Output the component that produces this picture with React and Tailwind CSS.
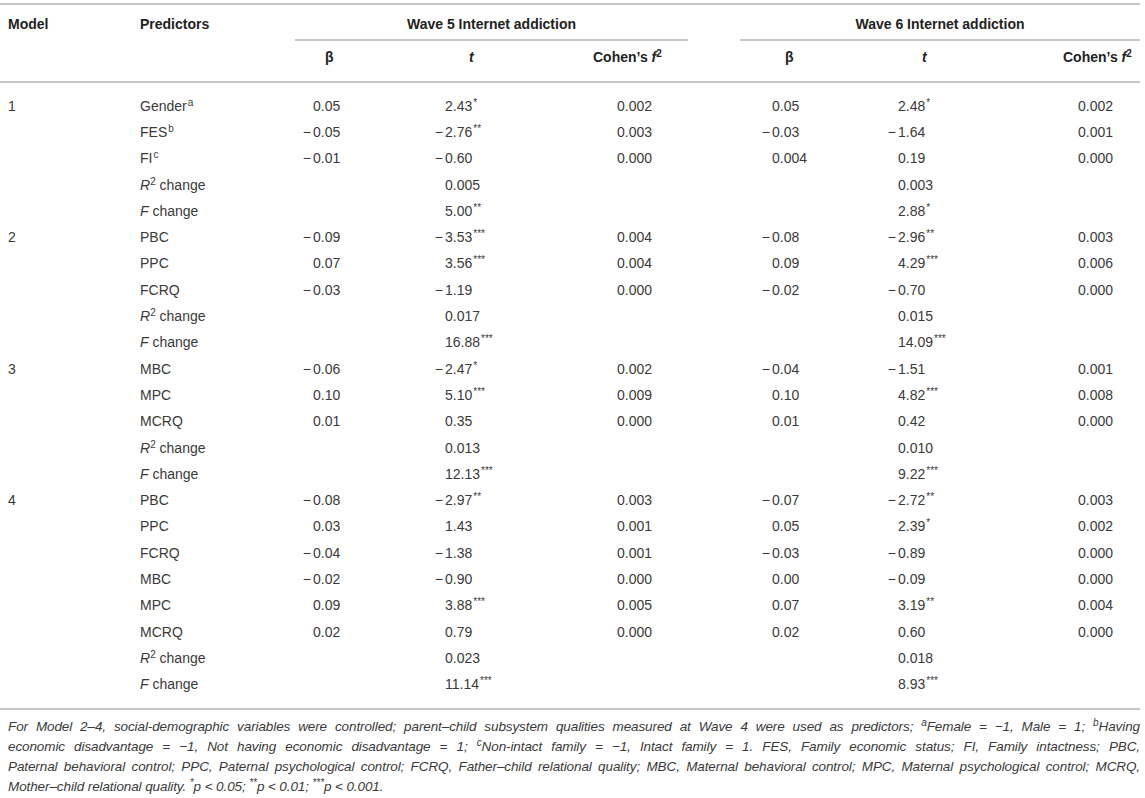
import React from "react";

const cols = "grid grid-cols-[140px_155px_105px_140px_148px_52px_120px_140px_140px]";

const rows = [
  ["1", "Gender", "a", ["0.05", "2.43*", "0.002", "0.05", "2.48*", "0.002"]],
  ["", "FES", "b", ["-0.05", "-2.76**", "0.003", "-0.03", "-1.64", "0.001"]],
  ["", "FI", "c", ["-0.01", "-0.60", "0.000", "0.004", "0.19", "0.000"]],
  ["", "R2", "", ["", "0.005", "", "", "0.003", ""]],
  ["", "F", "", ["", "5.00**", "", "", "2.88*", ""]],
  ["2", "PBC", "", ["-0.09", "-3.53***", "0.004", "-0.08", "-2.96**", "0.003"]],
  ["", "PPC", "", ["0.07", "3.56***", "0.004", "0.09", "4.29***", "0.006"]],
  ["", "FCRQ", "", ["-0.03", "-1.19", "0.000", "-0.02", "-0.70", "0.000"]],
  ["", "R2", "", ["", "0.017", "", "", "0.015", ""]],
  ["", "F", "", ["", "16.88***", "", "", "14.09***", ""]],
  ["3", "MBC", "", ["-0.06", "-2.47*", "0.002", "-0.04", "-1.51", "0.001"]],
  ["", "MPC", "", ["0.10", "5.10***", "0.009", "0.10", "4.82***", "0.008"]],
  ["", "MCRQ", "", ["0.01", "0.35", "0.000", "0.01", "0.42", "0.000"]],
  ["", "R2", "", ["", "0.013", "", "", "0.010", ""]],
  ["", "F", "", ["", "12.13***", "", "", "9.22***", ""]],
  ["4", "PBC", "", ["-0.08", "-2.97**", "0.003", "-0.07", "-2.72**", "0.003"]],
  ["", "PPC", "", ["0.03", "1.43", "0.001", "0.05", "2.39*", "0.002"]],
  ["", "FCRQ", "", ["-0.04", "-1.38", "0.001", "-0.03", "-0.89", "0.000"]],
  ["", "MBC", "", ["-0.02", "-0.90", "0.000", "0.00", "-0.09", "0.000"]],
  ["", "MPC", "", ["0.09", "3.88***", "0.005", "0.07", "3.19**", "0.004"]],
  ["", "MCRQ", "", ["0.02", "0.79", "0.000", "0.02", "0.60", "0.000"]],
  ["", "R2", "", ["", "0.023", "", "", "0.018", ""]],
  ["", "F", "", ["", "11.14***", "", "", "8.93***", ""]],
];

// padding / sign box per value column
const valueCols = [
  { pad: "pl-[4px]", sign: "w-[14px]" },
  { pad: "pl-[31px]", sign: "w-[14px]" },
  { pad: "pl-[77px]", sign: "" },
  { pad: "pl-[18px]", sign: "w-[14px]" },
  { pad: "pl-[24px]", sign: "w-[14px]" },
  { pad: "pl-[78px]", sign: "" },
];

function Num({ v, col }) {
  if (!v) return <div />;
  const neg = v.startsWith("-");
  const body = neg ? v.slice(1) : v;
  const stars = body.replace(/[^*]/g, "");
  const digits = body.replace(/\*/g, "");
  return (
    <div className={`${col.pad} whitespace-nowrap`}>
      {col.sign && (
        <span className={`inline-block text-right pr-[2px] ${col.sign}`}>{neg ? "\u2212" : ""}</span>
      )}
      {digits}
      {stars && <sup className="text-[10px] ml-[1px]">{stars}</sup>}
    </div>
  );
}

function Predictor({ name, sup }) {
  if (name === "R2")
    return (
      <div>
        <i>R</i>
        <sup className="text-[10px]">2</sup> change
      </div>
    );
  if (name === "F")
    return (
      <div>
        <i>F</i> change
      </div>
    );
  return (
    <div>
      {name}
      {sup && <sup className="text-[10px] ml-[1px]">{sup}</sup>}
    </div>
  );
}

export default function App() {
  return (
    <div className="w-[1145px] h-[798px] overflow-hidden bg-white pt-[3px] text-[14px] text-[#3a3a3a] font-['Liberation_Sans',Arial,sans-serif]">
      <div className="w-[1140px]">
        {/* header */}
        <div className="border-t-2 border-[#c6c6c6] font-bold text-[#222] leading-[17px]">
          <div className={`${cols} h-[36px]`}>
            <div className="pl-[8px] pt-[11px]">Model</div>
            <div className="pt-[11px]">Predictors</div>
            <div className="col-span-3 border-b-2 border-[#c6c6c6] pt-[11px] text-center">
              Wave 5 Internet addiction
            </div>
            <div />
            <div className="col-span-3 border-b-2 border-[#c6c6c6] pt-[11px] text-center">
              Wave 6 Internet addiction
            </div>
          </div>
          <div className={`${cols} h-[42px] border-b-2 border-[#c6c6c6] pt-[8px]`}>
            <div />
            <div />
            <div className="pl-[30px]">β</div>
            <div className="pl-[69px] italic">t</div>
            <div className="pl-[53px]">
              Cohen’s <i>f</i>
              <sup className="text-[10px]">2</sup>
            </div>
            <div />
            <div className="pl-[45px]">β</div>
            <div className="pl-[62px] italic">t</div>
            <div className="pl-[63px]">
              Cohen’s <i>f</i>
              <sup className="text-[10px]">2</sup>
            </div>
          </div>
        </div>

        {/* body */}
        <div className="pt-[10px] pb-[10px] border-b-2 border-[#c6c6c6]">
          {rows.map(([model, name, sup, vals], i) => (
            <div key={i} className={`${cols} h-[26.3px] items-center`}>
              <div className="pl-[8px]">{model}</div>
              <Predictor name={name} sup={sup} />
              <Num v={vals[0]} col={valueCols[0]} />
              <Num v={vals[1]} col={valueCols[1]} />
              <Num v={vals[2]} col={valueCols[2]} />
              <div />
              <Num v={vals[3]} col={valueCols[3]} />
              <Num v={vals[4]} col={valueCols[4]} />
              <Num v={vals[5]} col={valueCols[5]} />
            </div>
          ))}
        </div>

        {/* footnote */}
        <div className="mt-[7px] pl-[8px] italic text-[13.5px] tracking-[-0.1px] leading-[20px] text-[#3a3a3a]">
          <div className="text-justify [text-align-last:justify]">
            For Model 2–4, social-demographic variables were controlled; parent–child subsystem qualities measured at Wave 4 were used as predictors;{" "}
            <sup className="text-[10px]">a</sup>Female = −1, Male = 1; <sup className="text-[10px]">b</sup>Having
          </div>
          <div className="text-justify [text-align-last:justify]">
            economic disadvantage = −1, Not having economic disadvantage = 1; <sup className="text-[10px]">c</sup>Non-intact family = −1, Intact family =  1. FES, Family economic status; FI, Family intactness; PBC,
          </div>
          <div className="text-justify [text-align-last:justify]">
            Paternal behavioral control; PPC, Paternal psychological control; FCRQ, Father–child relational quality; MBC, Maternal behavioral control; MPC, Maternal psychological control; MCRQ,
          </div>
          <div>
            Mother–child relational quality. <sup className="text-[10px]">*</sup>p &lt; 0.05; <sup className="text-[10px]">**</sup>p &lt; 0.01; <sup className="text-[10px]">***</sup>p &lt; 0.001.
          </div>
        </div>
      </div>
    </div>
  );
}
